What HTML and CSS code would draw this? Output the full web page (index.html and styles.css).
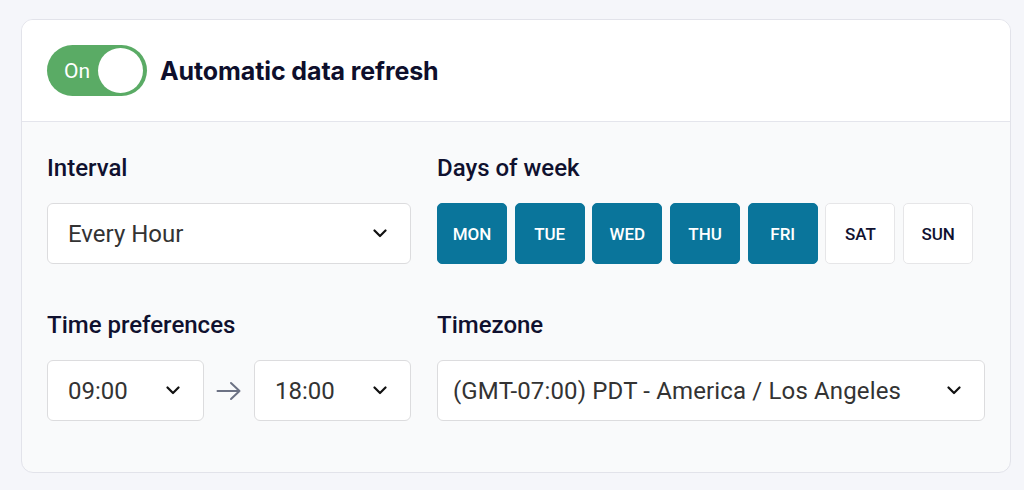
FILE: index.html
```html
<!DOCTYPE html>
<html lang="en">
<head>
<meta charset="utf-8">
<title>Automatic data refresh</title>
<link rel="stylesheet" href="styles.css">
</head>
<body>
<div class="card">
  <div class="card-header">
    <div class="toggle">
      <span class="toggle-label">On</span>
      <span class="toggle-knob"></span>
    </div>
    <h2 class="title">Automatic data refresh</h2>
  </div>
  <div class="card-body">
    <div class="field">
      <div class="label">Interval</div>
      <div class="select">
        <span class="select-value">Every Hour</span>
        <svg class="chev" viewBox="0 0 14 9" width="14" height="9"><path d="M1.5 1.5 L7 7 L12.5 1.5" fill="none" stroke="#111" stroke-width="2.2" stroke-linecap="round" stroke-linejoin="round"/></svg>
      </div>
    </div>
    <div class="field">
      <div class="label">Days of week</div>
      <div class="days">
        <span class="day on">MON</span>
        <span class="day on">TUE</span>
        <span class="day on">WED</span>
        <span class="day on">THU</span>
        <span class="day on">FRI</span>
        <span class="day">SAT</span>
        <span class="day">SUN</span>
      </div>
    </div>
    <div class="field">
      <div class="label">Time preferences</div>
      <div class="time-row">
        <div class="select">
          <span class="select-value">09:00</span>
          <svg class="chev" viewBox="0 0 14 9" width="14" height="9"><path d="M1.5 1.5 L7 7 L12.5 1.5" fill="none" stroke="#111" stroke-width="2.2" stroke-linecap="round" stroke-linejoin="round"/></svg>
        </div>
        <svg class="arrow" viewBox="0 0 26 20" width="26" height="20"><path d="M1.5 10 H23.5 M15 2 L23.5 10 L15 18" fill="none" stroke="#6c7284" stroke-width="2" stroke-linecap="round" stroke-linejoin="round"/></svg>
        <div class="select">
          <span class="select-value">18:00</span>
          <svg class="chev" viewBox="0 0 14 9" width="14" height="9"><path d="M1.5 1.5 L7 7 L12.5 1.5" fill="none" stroke="#111" stroke-width="2.2" stroke-linecap="round" stroke-linejoin="round"/></svg>
        </div>
      </div>
    </div>
    <div class="field">
      <div class="label">Timezone</div>
      <div class="select tz">
        <span class="select-value">(GMT-07:00) PDT - America / Los Angeles</span>
        <svg class="chev" viewBox="0 0 14 9" width="14" height="9"><path d="M1.5 1.5 L7 7 L12.5 1.5" fill="none" stroke="#111" stroke-width="2.2" stroke-linecap="round" stroke-linejoin="round"/></svg>
      </div>
    </div>
  </div>
</div>
</body>
</html>
```
FILE: styles.css
```css
* { box-sizing: border-box; }

html, body {
  margin: 0;
  padding: 0;
  background: #f5f6fa;
}

body {
  padding: 19px 13px 0 21px;
  font-family: Roboto, "Liberation Sans", sans-serif;
}

.card {
  width: 990px;
  border: 1px solid #e2e3ea;
  border-radius: 12px;
  overflow: hidden;
  background: #f9fafb;
}

.card-header {
  display: flex;
  align-items: center;
  gap: 13px;
  padding: 25px 25px 25px;
  background: #ffffff;
  border-bottom: 1px solid #e4e5ec;
}

.toggle {
  position: relative;
  display: flex;
  align-items: center;
  width: 100px;
  height: 51px;
  border-radius: 26px;
  background: #5aab65;
  padding-left: 17px;
}

.toggle-label {
  color: #ffffff;
  font-size: 21px;
  font-family: Roboto, sans-serif;
}

.toggle-knob {
  position: absolute;
  right: 4px;
  top: 3px;
  width: 45px;
  height: 45px;
  border-radius: 50%;
  background: #ffffff;
}

.title {
  margin: 0;
  font-family: Inter, "Noto Sans", sans-serif;
  font-weight: 700;
  font-size: 25px;
  color: #0e0f2c;
  letter-spacing: -0.1px;
}

.card-body {
  display: grid;
  grid-template-columns: 364px 1fr;
  column-gap: 26px;
  row-gap: 47px;
  padding: 32px 25px 51px;
}

.label {
  height: 28px;
  line-height: 28px;
  font-size: 24px;
  font-weight: 500;
  color: #10112f;
  margin-bottom: 21px;
}

.select {
  display: flex;
  align-items: center;
  justify-content: space-between;
  height: 61px;
  padding: 0 23px 0 20px;
  background: #ffffff;
  border: 1px solid #dcdcde;
  border-radius: 6px;
}

.select.tz { padding-left: 15px; }

.select-value {
  font-size: 24px;
  color: #333333;
  white-space: nowrap;
}

.tz .select-value { letter-spacing: 0.15px; }

.chev { display: block; flex: none; }

.days {
  display: flex;
  gap: 7.7px;
}

.day {
  display: flex;
  align-items: center;
  justify-content: center;
  width: 70px;
  height: 61px;
  border-radius: 5px;
  border: 1px solid #e6e6e8;
  background: #ffffff;
  color: #10112f;
  font-size: 17px;
  font-weight: 500;
}

.day.on {
  background: #0a759b;
  border-color: #0a759b;
  color: #ffffff;
}

.time-row {
  display: flex;
  align-items: center;
  gap: 12px;
}

.time-row .select { flex: 1; }

.arrow { display: block; flex: none; }
```
